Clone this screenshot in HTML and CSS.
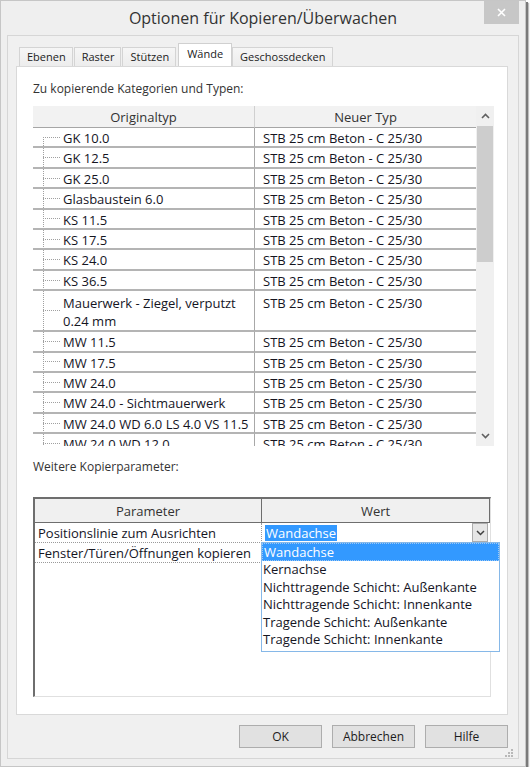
FILE: index.html
```html
<!DOCTYPE html>
<html lang="de">
<head>
    <meta charset="UTF-8">
    <meta name="viewport" content="width=device-width, initial-scale=1.0">
    <title>Optionen für Kopieren/Überwachen</title>
    <link rel="stylesheet" href="styles.css">
</head>
<body>
    <div class="window">
        <div class="titlebar">
            <div class="title">Optionen für Kopieren/Überwachen</div>
            <button class="close-btn" title="Schließen">
                <svg width="9" height="9" viewBox="0 0 9 9"><path d="M1 1 L8 8 M8 1 L1 8" stroke="#fff" stroke-width="1.6"/></svg>
            </button>
        </div>

        <div class="client">
            <div class="tabs">
                <div class="tab">Ebenen</div>
                <div class="tab">Raster</div>
                <div class="tab">Stützen</div>
                <div class="tab active">Wände</div>
                <div class="tab">Geschossdecken</div>
            </div>

            <div class="tab-panel">
                <div class="group-label">Zu kopierende Kategorien und Typen:</div>

                <div class="type-grid">
                    <div class="type-list">
                        <table>
                            <thead>
                                <tr><th>Originaltyp</th><th>Neuer Typ</th></tr>
                            </thead>
                            <tbody>
                                <tr class="first"><td class="orig">GK 10.0</td><td>STB 25 cm Beton - C 25/30</td></tr>
                                <tr><td class="orig">GK 12.5</td><td>STB 25 cm Beton - C 25/30</td></tr>
                                <tr><td class="orig">GK 25.0</td><td>STB 25 cm Beton - C 25/30</td></tr>
                                <tr><td class="orig">Glasbaustein 6.0</td><td>STB 25 cm Beton - C 25/30</td></tr>
                                <tr><td class="orig">KS 11.5</td><td>STB 25 cm Beton - C 25/30</td></tr>
                                <tr><td class="orig">KS 17.5</td><td>STB 25 cm Beton - C 25/30</td></tr>
                                <tr><td class="orig">KS 24.0</td><td>STB 25 cm Beton - C 25/30</td></tr>
                                <tr><td class="orig">KS 36.5</td><td>STB 25 cm Beton - C 25/30</td></tr>
                                <tr class="tall"><td class="orig">Mauerwerk - Ziegel, verputzt<br>0.24 mm</td><td>STB 25 cm Beton - C 25/30</td></tr>
                                <tr><td class="orig">MW 11.5</td><td>STB 25 cm Beton - C 25/30</td></tr>
                                <tr><td class="orig">MW 17.5</td><td>STB 25 cm Beton - C 25/30</td></tr>
                                <tr><td class="orig">MW 24.0</td><td>STB 25 cm Beton - C 25/30</td></tr>
                                <tr><td class="orig">MW 24.0 - Sichtmauerwerk</td><td>STB 25 cm Beton - C 25/30</td></tr>
                                <tr><td class="orig">MW 24.0 WD 6.0 LS 4.0 VS 11.5</td><td>STB 25 cm Beton - C 25/30</td></tr>
                                <tr><td class="orig">MW 24.0 WD 12.0</td><td>STB 25 cm Beton - C 25/30</td></tr>
                            </tbody>
                        </table>
                    </div>
                    <div class="vscroll">
                        <div class="scroll-arrow">
                            <svg width="9" height="6" viewBox="0 0 9 6"><path d="M1 5 L4.5 1.5 L8 5" fill="none" stroke="#606060" stroke-width="1.6"/></svg>
                        </div>
                        <div class="scroll-thumb"></div>
                        <div class="scroll-track"></div>
                        <div class="scroll-arrow">
                            <svg width="9" height="6" viewBox="0 0 9 6"><path d="M1 1 L4.5 4.5 L8 1" fill="none" stroke="#606060" stroke-width="1.6"/></svg>
                        </div>
                    </div>
                </div>

                <div class="group-label lower">Weitere Kopierparameter:</div>

                <div class="param-grid">
                    <table>
                        <thead>
                            <tr><th>Parameter</th><th>Wert</th></tr>
                        </thead>
                        <tbody>
                            <tr>
                                <td>Positionslinie zum Ausrichten</td>
                                <td class="value-cell">
                                    <div class="combo">
                                        <span class="combo-text">Wandachse</span>
                                        <span class="combo-btn">
                                            <svg width="9" height="6" viewBox="0 0 9 6"><path d="M1 1 L4.5 4.5 L8 1" fill="none" stroke="#404040" stroke-width="1.5"/></svg>
                                        </span>
                                    </div>
                                    <ul class="dropdown">
                                        <li class="selected">Wandachse</li>
                                        <li>Kernachse</li>
                                        <li>Nichttragende Schicht: Außenkante</li>
                                        <li>Nichttragende Schicht: Innenkante</li>
                                        <li>Tragende Schicht: Außenkante</li>
                                        <li>Tragende Schicht: Innenkante</li>
                                    </ul>
                                </td>
                            </tr>
                            <tr>
                                <td>Fenster/Türen/Öffnungen kopieren</td>
                                <td></td>
                            </tr>
                        </tbody>
                    </table>
                </div>
            </div>

            <div class="buttons">
                <button class="btn">OK</button>
                <button class="btn">Abbrechen</button>
                <button class="btn">Hilfe</button>
                <svg class="grip" width="8" height="8" viewBox="0 0 8 8">
                    <rect x="6" y="0" width="2" height="2" fill="#b8b8b8"/>
                    <rect x="3" y="3" width="2" height="2" fill="#b8b8b8"/>
                    <rect x="6" y="3" width="2" height="2" fill="#b8b8b8"/>
                    <rect x="0" y="6" width="2" height="2" fill="#b8b8b8"/>
                    <rect x="3" y="6" width="2" height="2" fill="#b8b8b8"/>
                    <rect x="6" y="6" width="2" height="2" fill="#b8b8b8"/>
                </svg>
            </div>
        </div>
    </div>
</body>
</html>
```

FILE: styles.css
```css
* {
    box-sizing: border-box;
}

body {
    margin: 0;
    background: #ffffff;
    font-family: 'Open Sans', 'Noto Sans', sans-serif;
    font-size: 12px;
    color: #15151f;
}

.window {
    width: 526px;
    height: 767px;
    display: flex;
    flex-direction: column;
    background: #efefef;
    border: 1px solid #c6c6c6;
    box-shadow: 2px 2px 0 #7a7a7a, 3px 3px 1px rgba(0, 0, 0, 0.25);
}

/* Titelleiste */
.titlebar {
    height: 34px;
    display: grid;
    grid-template-columns: 1fr auto 1fr;
    align-items: center;
}

.title {
    grid-column: 2;
    font-size: 16px;
    color: #333;
}

.close-btn {
    grid-column: 3;
    justify-self: end;
    align-self: start;
    width: 35px;
    height: 23px;
    margin-right: 6px;
    padding: 0;
    border: none;
    background: #c7c7c7;
    display: flex;
    align-items: center;
    justify-content: center;
}

.client {
    flex: 1;
    margin: 0 6px 7px 6px;
    border: 1px solid #d6d6d6;
    background: #f0f0f0;
    padding: 7px 10px 0 8px;
    display: flex;
    flex-direction: column;
}

/* Registerkarten */
.tabs {
    display: flex;
    align-items: flex-end;
    height: 24px;
    padding-left: 3px;
    margin-bottom: -1px;
    font-size: 11px;
}

.tab {
    height: 20px;
    line-height: 18px;
    padding: 0 6px 0 7px;
    margin-right: 1px;
    border: 1px solid #d4d4d4;
    border-bottom: none;
    background: linear-gradient(#f6f6f6, #ececec);
    color: #222;
}

.tab.active {
    height: 24px;
    line-height: 20px;
    margin: 0 0 0 1px;
    padding: 0 8px;
    background: #ffffff;
    border-color: #d0d0d0;
}

.tab-panel {
    height: 649px;
    background: #ffffff;
    border: 1px solid #d9d9d9;
    padding: 14px 16px 0 16px;
}

.group-label {
    line-height: 16px;
    color: #333;
}

.group-label.lower {
    margin-top: 13px;
}

/* Typentabelle mit Bildlaufleiste */
.type-grid {
    display: flex;
    width: 461px;
    height: 340px;
    margin-top: 9px;
    font-size: 13px;
}

.type-list {
    flex: 1;
    overflow: hidden;
}

.type-list table {
    width: 443px;
    table-layout: fixed;
    border-collapse: separate;
    border-spacing: 0;
}

.type-list th {
    height: 22px;
    font-weight: normal;
    background: #f2f2f2;
    border-bottom: 1px solid #a6a6a6;
    color: #333;
    padding: 0;
}

.type-list th:first-child {
    width: 222px;
    border-right: 1px solid #d0d0d0;
}

.type-list td {
    height: 20.4px;
    line-height: 16.4px;
    padding: 2px 0 0 8px;
    border-bottom: 2px solid #b4b4b4;
    white-space: nowrap;
    vertical-align: top;
}

.type-list td.orig {
    padding-left: 30px;
    border-right: 1px solid #a8a8a8;
    background-image:
        repeating-linear-gradient(to bottom, #a0a0a0 0 1px, transparent 1px 2px),
        repeating-linear-gradient(to right, #a0a0a0 0 1px, transparent 1px 2px);
    background-size: 1px 100%, 18px 1px;
    background-position: 10px 0, 10px 50%;
    background-repeat: no-repeat;
}

.type-list tr.first td.orig {
    background-size: 1px 50%, 18px 1px;
    background-position: 10px 100%, 10px 50%;
}

.type-list tr.tall td {
    height: 41px;
    line-height: 18px;
    padding-top: 3px;
}

.vscroll {
    width: 18px;
    display: flex;
    flex-direction: column;
    background: #f0f0f0;
}

.scroll-arrow {
    height: 20px;
    display: flex;
    align-items: center;
    justify-content: center;
}

.scroll-thumb {
    height: 136px;
    margin: 0 1px;
    background: #cdcdcd;
}

.scroll-track {
    flex: 1;
}

/* Parametertabelle */
.param-grid {
    width: 458px;
    height: 200px;
    margin-top: 22px;
    background: #ffffff;
    font-size: 13px;
    border-left: 2px solid #6e6e6e;
    border-top: 2px solid #6e6e6e;
    border-right: 1px solid #e0e0e0;
    border-bottom: 1px solid #e0e0e0;
}

.param-grid table {
    width: 100%;
    table-layout: fixed;
    border-collapse: separate;
    border-spacing: 0;
}

.param-grid th {
    height: 24px;
    padding: 0;
    font-weight: normal;
    background: #f0f0f0;
    border-bottom: 1px solid #6e6e6e;
    border-right: 1px solid #6e6e6e;
    color: #333;
}

.param-grid th:first-child {
    width: 227px;
}

.param-grid td {
    height: 20px;
    padding: 0 0 0 3px;
    line-height: 18px;
    border-bottom: 1px dotted #9a9a9a;
    white-space: nowrap;
}

.param-grid td:first-child {
    border-right: 1px dotted #9a9a9a;
}

.value-cell {
    position: relative;
}

.combo {
    display: flex;
    align-items: center;
    justify-content: space-between;
}

.combo-text {
    background: #3399ff;
    color: #ffffff;
    line-height: 16px;
    padding: 0 1px;
}

.combo-btn {
    width: 16px;
    height: 19px;
    margin-right: 2px;
    border: 1px solid #acacac;
    background: #e6e6e6;
    display: flex;
    align-items: center;
    justify-content: center;
}

/* aufgeklappte Auswahlliste */
.dropdown {
    position: absolute;
    left: -1px;
    top: 100%;
    z-index: 2;
    width: 239px;
    height: 110px;
    margin: 0;
    padding: 0;
    list-style: none;
    background: #ffffff;
    border: 1px solid #86b8e8;
}

.dropdown li {
    line-height: 17.4px;
    padding-left: 1px;
}

.dropdown li.selected {
    background: #3399ff;
    color: #ffffff;
    border: 1px dotted #9cc8f5;
    line-height: 16.4px;
}

/* Schaltflächen unten */
.buttons {
    flex: 1;
    display: flex;
    justify-content: flex-end;
    align-items: flex-start;
    padding-top: 10px;
}

.btn {
    width: 83px;
    height: 23px;
    margin-left: 10px;
    padding: 0;
    font-family: inherit;
    font-size: 12px;
    color: #1c1c1c;
    background: #e1e1e1;
    border: 1px solid #adadad;
}

.grip {
    align-self: flex-end;
    margin: 0 -5px 1px -3px;
}
```
